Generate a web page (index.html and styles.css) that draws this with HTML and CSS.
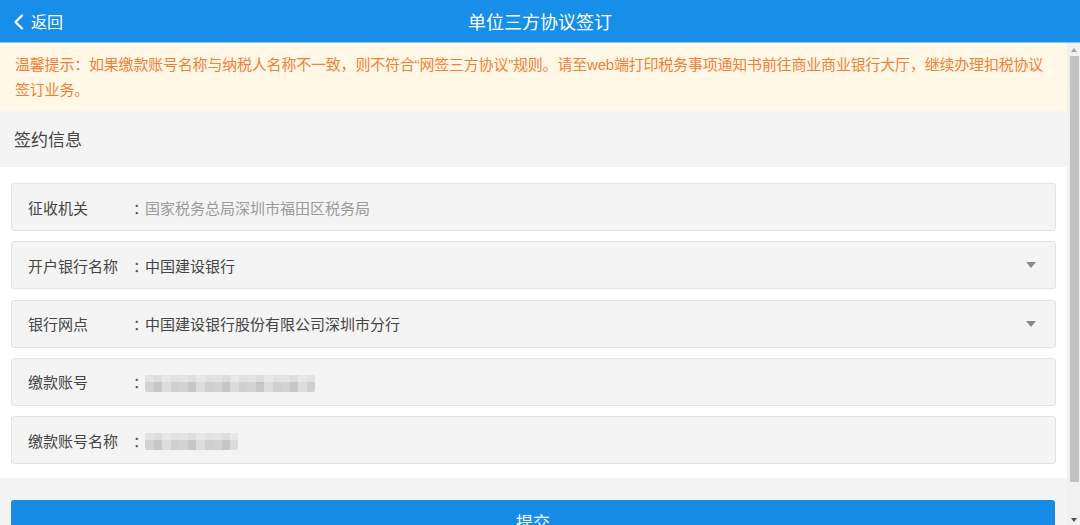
FILE: index.html
```html
<!DOCTYPE html>
<html lang="zh-CN">
<head>
<meta charset="utf-8">
<title>单位三方协议签订</title>
<link rel="stylesheet" href="styles.css">
</head>
<body>
<div class="app">
  <header class="topbar">
    <div class="back">
      <svg class="chev" width="12" height="16" viewBox="0 0 12 16"><path d="M9 1.5 L2.5 8 L9 14.5" fill="none" stroke="#fff" stroke-width="2.2" stroke-linecap="round" stroke-linejoin="round"/></svg>
      <span>返回</span>
    </div>
    <h1 class="title">单位三方协议签订</h1>
  </header>
  <div class="body">
    <main class="content">
      <div class="notice">温馨提示：如果缴款账号名称与纳税人名称不一致，则不符合“网签三方协议”规则。请至web端打印税务事项通知书前往商业商业银行大厅，继续办理扣税协议<br>签订业务。</div>
      <div class="section-title">签约信息</div>
      <div class="form">
        <div class="field">
          <span class="label">征收机关</span><span class="colon">：</span><span class="value disabled">国家税务总局深圳市福田区税务局</span>
        </div>
        <div class="field">
          <span class="label">开户银行名称</span><span class="colon">：</span><span class="value">中国建设银行</span><span class="caret"></span>
        </div>
        <div class="field">
          <span class="label">银行网点</span><span class="colon">：</span><span class="value">中国建设银行股份有限公司深圳市分行</span><span class="caret"></span>
        </div>
        <div class="field">
          <span class="label">缴款账号</span><span class="colon">：</span><span class="blur blur-long"></span>
        </div>
        <div class="field">
          <span class="label">缴款账号名称</span><span class="colon">：</span><span class="blur blur-short"></span>
        </div>
      </div>
      <div class="footer">
        <button class="submit">提交</button>
      </div>
    </main>
    <div class="scrollbar">
      <span class="arrow up"></span>
      <span class="thumb"></span>
      <span class="arrow down"></span>
    </div>
  </div>
</div>
</body>
</html>
```
FILE: styles.css
```css
* { box-sizing: border-box; }
html, body { margin: 0; padding: 0; }
body {
  font-family: "Noto Sans CJK SC", "Microsoft YaHei", sans-serif;
  background: #fff;
  color: #333;
}
.app {
  width: 1080px;
  height: 525px;
  overflow: hidden;
  display: flex;
  flex-direction: column;
}
.topbar {
  height: 43px;
  flex: none;
  background: #178ee8;
  border-bottom: 1px solid #86c4f3;
  display: flex;
  align-items: center;
  justify-content: center;
  position: relative;
}
.back {
  position: absolute;
  left: 13px;
  top: 0;
  height: 42px;
  display: flex;
  align-items: center;
  gap: 6px;
  color: #fff;
  font-size: 16px;
}
.chev { display: block; margin-top: 1px; }
.title {
  margin: 0;
  font-size: 18px;
  font-weight: normal;
  color: #fff;
  line-height: 42px;
}
.body {
  flex: 1;
  display: flex;
  min-height: 0;
}
.content {
  flex: 1;
  min-width: 0;
  overflow: hidden;
  display: flex;
  flex-direction: column;
}
.content > * { flex: none; }
.notice {
  background: #fff8e7;
  color: #f47f36;
  font-family: "Liberation Sans", "Noto Sans CJK SC", sans-serif;
  font-size: 15px;
  letter-spacing: -0.2px;
  line-height: 25px;
  padding: 9px 10px 9px 15px;
  white-space: nowrap;
}
.section-title {
  background: #f4f4f4;
  height: 56px;
  line-height: 56px;
  padding-left: 14px;
  font-size: 17px;
  color: #444;
}
.form {
  background: #fff;
  padding: 16px 11px 14px;
  display: flex;
  flex-direction: column;
  gap: 10.3px;
}
.field {
  height: 48px;
  background: #f4f4f4;
  border: 1px solid #e2e2e2;
  border-radius: 3px;
  display: flex;
  align-items: center;
  padding-left: 16px;
  font-size: 15px;
  color: #444;
}
.label { width: 105px; flex: none; }
.colon { flex: none; letter-spacing: -3px; color: #555; }
.value { flex: 1; color: #444; }
.value.disabled { color: #9a9a9a; }
.caret {
  width: 0; height: 0;
  border-left: 5px solid transparent;
  border-right: 5px solid transparent;
  border-top: 6px solid #8a8a8a;
  margin-right: 19px;
}
.blur {
  height: 17px;
  margin-top: 3px;
  background:
    linear-gradient(to bottom, rgba(244,244,244,0.5) 0 40%, transparent 40%),
    repeating-linear-gradient(to right, #d2d2d2 0 9px, #c6c6c6 9px 17px, #dcdcdc 17px 26px, #cfcfcf 26px 34px);
  border-radius: 2px;
}
.blur-long { width: 170px; }
.blur-short { width: 93px; }
.footer {
  background: #f4f4f4;
  padding: 22px 12px 0 11px;
}
.submit {
  width: 100%;
  height: 44px;
  border: none;
  border-radius: 3px;
  background: #178ce6;
  color: #fff;
  font-family: inherit;
  font-size: 17px;
  padding: 0;
  line-height: 44px;
}
.scrollbar {
  width: 13px;
  flex: none;
  background: #f1f1f1;
  display: flex;
  flex-direction: column;
  align-items: center;
  padding: 5px 0 3px;
}
.arrow {
  width: 0; height: 0;
  border-left: 3.5px solid transparent;
  border-right: 3.5px solid transparent;
}
.arrow.up { border-bottom: 4px solid #a3a3a3; }
.arrow.down { border-top: 4px solid #505050; margin-top: auto; }
.thumb {
  width: 9px;
  height: 426px;
  margin-top: 4px;
  margin-left: 2px;
  background: #c1c1c1;
}
```
